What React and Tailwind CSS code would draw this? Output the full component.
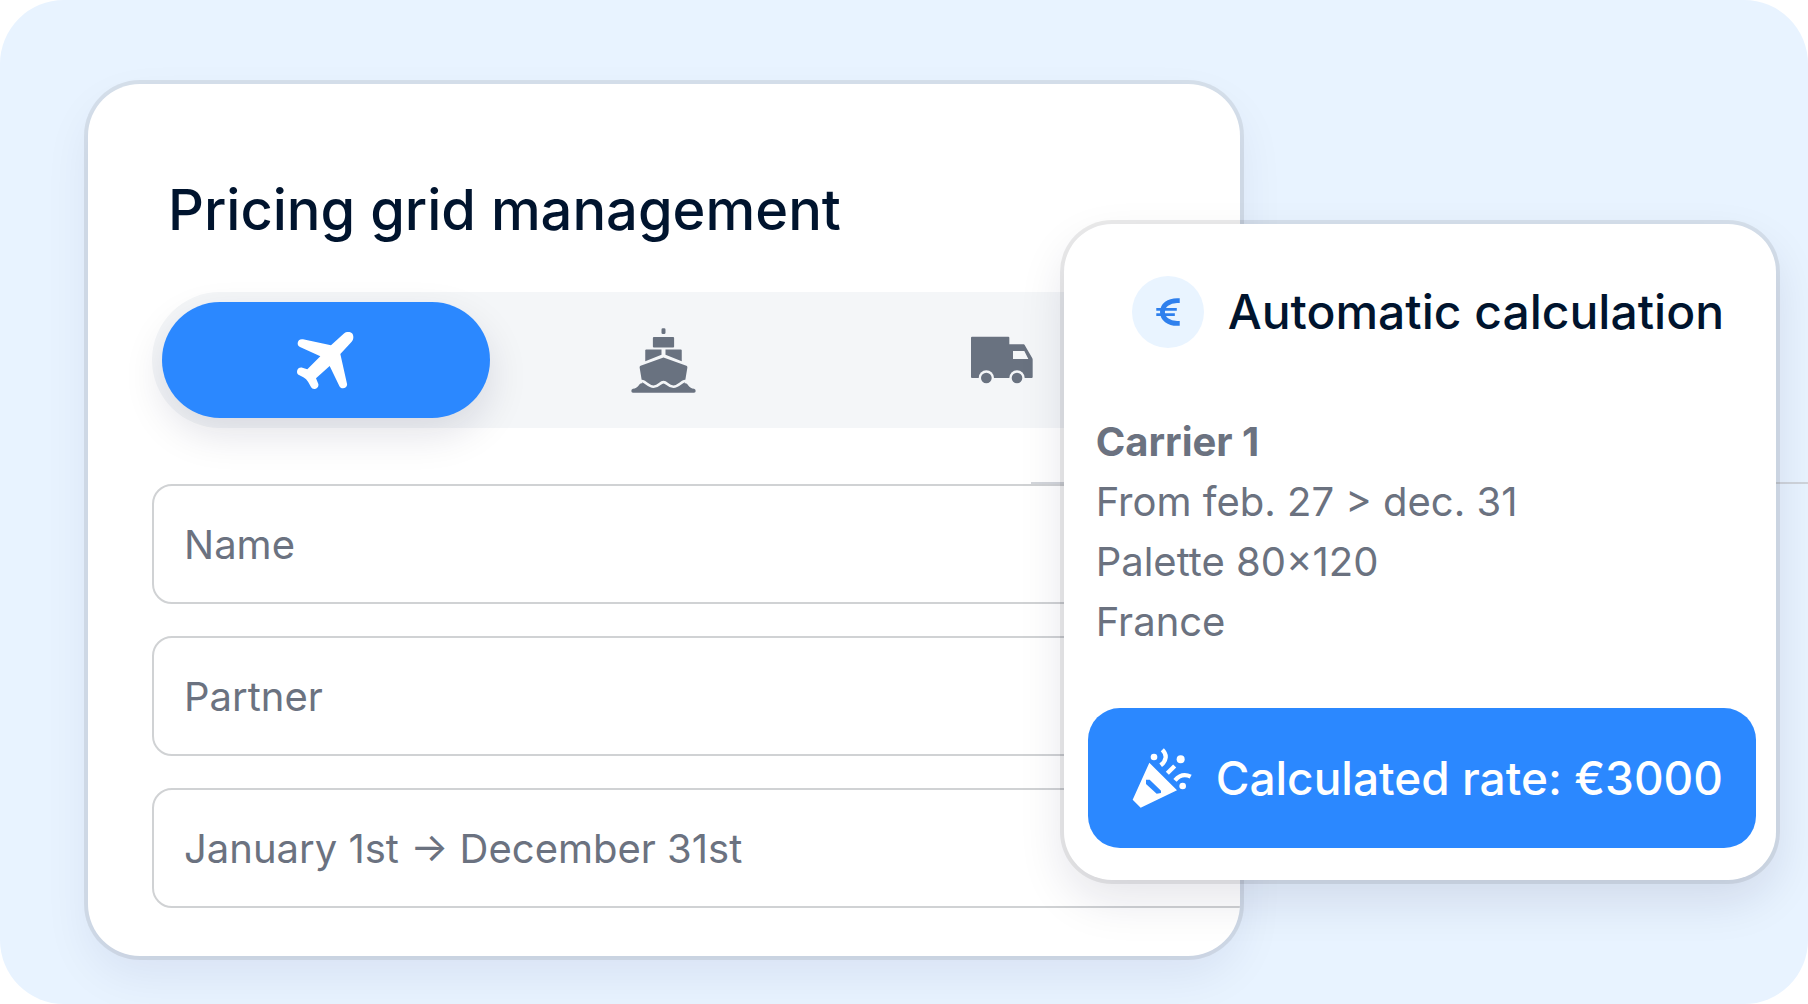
import { useState } from "react";

function PlaneIcon() {
  return (
    <svg viewBox="48 48 171 171" className="size-[57px]" fill="currentColor" aria-hidden="true">
      <path d="M188 53C196 46 207 46 213 52C219 59 218 70 212 77L178 114L198 203C200 211 193 217 186 217C181 217 177 215 175 210L146 150L105 187L112 204C114 212 108 219 100 219C95 219 92 217 90 213L82 199C78 192 73 187 67 184L54 177C50 175 48 171 48 167C48 158 56 153 64 155L79 160L118 121L57 93C52 91 50 87 50 82C50 73 58 68 66 70L150 88Z" />
    </svg>
  );
}

function ShipIcon() {
  return (
    <svg viewBox="36 36 194 202" className="h-[67px] w-[65px]" fill="currentColor" aria-hidden="true">
      <rect x="127" y="40" width="12" height="17" rx="4" />
      <rect x="101" y="66" width="64" height="32" rx="3" />
      <path d="M81 104H127V120L78 139V107Q78 104 81 104Z" />
      <path d="M185 104H139V120L188 139V107Q188 104 185 104Z" />
      <path d="M133 128L202 153Q205 154 205 158L197 206C207 203 208 222 225 222Q230 223 230 229Q230 234 225 234H41Q36 234 36 229Q36 223 41 222C58 222 59 203 69 206L61 158Q61 154 64 153Z" />
      <path
        d="M58 203C76 190 82 216 103 216C120 216 122 202 133 202C144 202 146 216 163 216C184 216 190 190 208 203"
        fill="none"
        stroke="#f4f6f8"
        strokeWidth="8"
      />
    </svg>
  );
}

function TruckIcon() {
  return (
    <svg viewBox="48 46 186 144" className="h-12 w-[62px]" fill="currentColor" aria-hidden="true">
      <path
        fillRule="evenodd"
        d="M51 48H160Q163 48 163 51V71H206Q208 71 209 73L232 113Q233 115 233 117V169Q233 172 230 172H51Q48 172 48 169V51Q48 48 51 48ZM174 91V115H220L208 91Z"
      />
      <circle cx="94" cy="172" r="23" fill="#f4f6f8" />
      <circle cx="186" cy="172" r="23" fill="#f4f6f8" />
      <circle cx="94" cy="172" r="16" />
      <circle cx="186" cy="172" r="16" />
    </svg>
  );
}

function PartyIcon() {
  return (
    <svg viewBox="64 52 180 180" className="size-15 shrink-0" fill="currentColor" aria-hidden="true">
      <path
        fillRule="evenodd"
        d="M116 96L199 179L90 231L66 207ZM106 147V160L138 189L151 187V180L117 147Z"
      />
      <circle cx="130" cy="79" r="10" />
      <circle cx="210" cy="86" r="12" />
      <circle cx="216" cy="166" r="10" />
      <g fill="none" stroke="currentColor" strokeWidth="13">
        <path d="M155 57C170 72 168 90 150 104" />
        <path d="M170 128L192 106" />
        <path d="M193 149C207 133 224 130 240 138" />
      </g>
    </svg>
  );
}

function EuroIcon() {
  return (
    <svg viewBox="108 92 72 86" className="h-7 w-6" fill="none" stroke="currentColor" aria-hidden="true">
      <path d="M180 100H172C146 100 127 114 127 135S146 170 172 170H180" strokeWidth="15" />
      <path d="M108 127H171M108 143H165" strokeWidth="8" />
    </svg>
  );
}

const modes = [
  { id: "air", label: "Air", Icon: PlaneIcon },
  { id: "sea", label: "Sea", Icon: ShipIcon },
  { id: "road", label: "Road", Icon: TruckIcon },
];

const fields = [
  { id: "name", label: "Name", placeholder: "Name" },
  { id: "partner", label: "Partner", placeholder: "Partner" },
  { id: "period", label: "Period", placeholder: "January 1st → December 31st" },
];

function PricingCard() {
  const [mode, setMode] = useState("air");

  return (
    <section className="min-w-0 flex-1 overflow-hidden rounded-[52px] bg-white px-16 pt-[90px] pb-12 shadow-[0_0_0_4px_rgba(0,0,0,0.08),0_20px_48px_rgba(20,20,90,0.07)]">
      <h1 className="pl-4 text-[56px] leading-[72px] font-medium whitespace-nowrap text-[#00142e]">
        Pricing grid management
      </h1>

      <div className="mt-[46px] flex gap-2.5 rounded-full bg-[#f4f6f8] p-2.5">
        {modes.map(({ id, label, Icon }) => (
          <button
            key={id}
            type="button"
            aria-label={label}
            aria-pressed={mode === id}
            onClick={() => setMode(id)}
            className={
              mode === id
                ? "flex h-[116px] flex-1 items-center justify-center rounded-full bg-[#2b88ff] text-white shadow-[0_16px_40px_rgba(20,20,60,0.12)]"
                : "flex h-[116px] flex-1 items-center justify-center rounded-full text-[#697280]"
            }
          >
            <Icon />
          </button>
        ))}
      </div>

      {/* fields run past the right edge of the card */}
      <form className="-mr-24 mt-14 flex flex-col gap-8">
        {fields.map((field) => (
          <input
            key={field.id}
            name={field.id}
            type="text"
            aria-label={field.label}
            placeholder={field.placeholder}
            className="h-[120px] w-full rounded-[20px] border-2 border-[#d0d2d4] bg-transparent px-[30px] text-[40px] text-[#6b7280] outline-none placeholder:text-[#6b7280] placeholder:opacity-100"
          />
        ))}
      </form>
    </section>
  );
}

function CalculationCard() {
  return (
    <section className="z-10 mt-35 -ml-44 w-[42.2%] min-w-max shrink-0 rounded-[48px] bg-white pt-[52px] pr-5 pb-8 pl-6 shadow-[0_0_0_4px_rgba(0,0,0,0.08),0_20px_48px_rgba(20,20,60,0.11)]">
      <header className="flex items-center gap-6 pl-11">
        <span className="flex size-18 items-center justify-center rounded-full bg-[#e9f4ff] text-[#2f80ed]">
          <EuroIcon />
        </span>
        <h2 className="text-5xl font-medium whitespace-nowrap text-[#00142e]">Automatic calculation</h2>
      </header>

      <div className="mt-16 pl-2 text-[40px] leading-[60px] text-[#6b7280]">
        <p className="font-bold">Carrier 1</p>
        <p>From feb. 27 &gt; dec. 31</p>
        <p>Palette 80×120</p>
        <p>France</p>
      </div>

      <button
        type="button"
        className="mt-14 flex h-35 w-full items-center gap-6 rounded-[32px] bg-[#2b88ff] pr-6 pl-11 text-[46px] font-medium whitespace-nowrap text-white"
      >
        <PartyIcon />
        Calculated rate: €3000
      </button>
    </section>
  );
}

export default function App() {
  return (
    <div className="min-h-screen bg-white font-['Inter',sans-serif]">
      <main className="relative flex min-h-screen items-start overflow-hidden rounded-[64px] bg-[#e8f3ff] pt-21 pr-8 pb-12 pl-22">
        <PricingCard />
        <div className="absolute top-[482px] right-0 left-[57%] h-0.5 bg-[#c8ccd2]/80" />
        <CalculationCard />
      </main>
    </div>
  );
}
